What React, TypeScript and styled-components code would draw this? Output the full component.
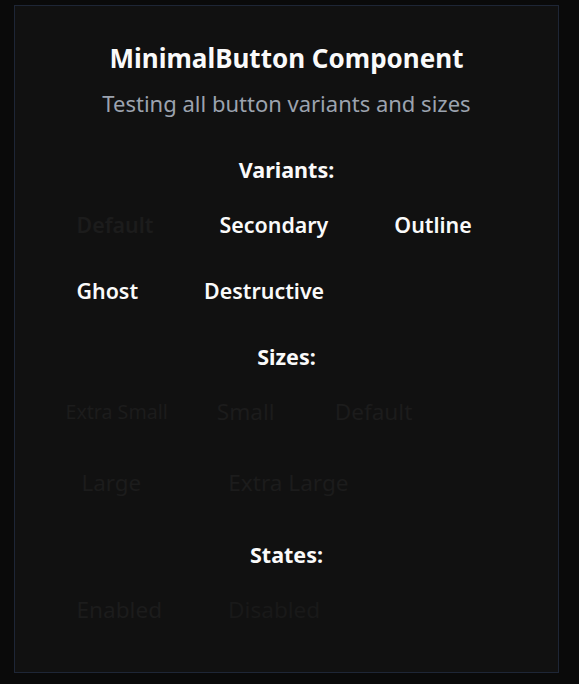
import React from "react";
import styled, { createGlobalStyle } from "styled-components";

const Global = createGlobalStyle`
  html, body { margin: 0; padding: 0; background: #0a0a0a; }
  body { font-family: "Noto Sans", "DejaVu Sans", sans-serif; }
  * { box-sizing: border-box; }
`;

const Page = styled.div`
  padding: 5px 20px 12px 14px;
`;

const Card = styled.section`
  width: 545px;
  height: 668px;
  background: #111111;
  border: 1px solid #1e2636;
  padding: 34px 0 0;
  display: flex;
  flex-direction: column;
  align-items: center;
`;

const Title = styled.h1`
  margin: 0;
  font-size: 26px;
  line-height: 36px;
  font-weight: 700;
  color: #fafafa;
`;

const Subtitle = styled.p`
  margin: 13px 0 0;
  font-size: 22px;
  line-height: 28px;
  color: #9ca3af;
`;

const Section = styled.div<{ $top: number }>`
  margin-top: ${(p) => p.$top}px;
  display: flex;
  flex-direction: column;
  align-items: center;
  gap: 15px;
`;

const Heading = styled.h2`
  margin: 0;
  font-size: 21.5px;
  line-height: 28px;
  font-weight: 700;
  color: #fafafa;
`;

const Row = styled.div`
  width: 454px;
  display: flex;
  flex-wrap: wrap;
  align-items: center;
  column-gap: 32px;
  row-gap: 16px;
`;

type Variant = "default" | "secondary" | "outline" | "ghost" | "destructive";
type Size = "xs" | "sm" | "md" | "lg" | "xl";

const sizes: Record<Size, { h: number; px: number; fs: number }> = {
  xs: { h: 40, px: 6, fs: 19.6 },
  sm: { h: 44, px: 11, fs: 22.6 },
  md: { h: 50, px: 17, fs: 22.6 },
  lg: { h: 60, px: 22, fs: 22.4 },
  xl: { h: 60, px: 33, fs: 22.6 },
};

const variantColor: Record<Variant, string> = {
  default: "#1c1c1c",
  secondary: "#fafafa",
  outline: "#fafafa",
  ghost: "#fafafa",
  destructive: "#fafafa",
};

const MinimalButton = styled.button<{ $variant: Variant; $size: Size; $strong?: boolean }>`
  height: ${(p) => sizes[p.$size].h}px;
  padding: 0 ${(p) => sizes[p.$size].px}px;
  font-family: inherit;
  font-size: ${(p) => (p.$strong ? 21.4 : sizes[p.$size].fs)}px;
  font-weight: ${(p) => (p.$strong ? 600 : 400)};
  color: ${(p) => variantColor[p.$variant]};
  background: transparent;
  border: none;
  white-space: nowrap;
  cursor: pointer;
  &:disabled {
    color: #191919;
    cursor: default;
  }
`;

export default function App() {
  return (
    <>
      <Global />
      <Page>
        <Card>
          <Title>MinimalButton Component</Title>
          <Subtitle>Testing all button variants and sizes</Subtitle>

          <Section $top={39}>
            <Heading>Variants:</Heading>
            <Row>
              <MinimalButton $variant="default" $size="md" $strong>Default</MinimalButton>
              <MinimalButton $variant="secondary" $size="md" $strong>Secondary</MinimalButton>
              <MinimalButton $variant="outline" $size="md" $strong>Outline</MinimalButton>
              <MinimalButton $variant="ghost" $size="md" $strong>Ghost</MinimalButton>
              <MinimalButton $variant="destructive" $size="md" $strong>Destructive</MinimalButton>
            </Row>
          </Section>

          <Section $top={28}>
            <Heading>Sizes:</Heading>
            <Row>
              <MinimalButton $variant="default" $size="xs">Extra Small</MinimalButton>
              <MinimalButton $variant="default" $size="sm">Small</MinimalButton>
              <MinimalButton $variant="default" $size="md">Default</MinimalButton>
              <MinimalButton $variant="default" $size="lg">Large</MinimalButton>
              <MinimalButton $variant="default" $size="xl">Extra Large</MinimalButton>
            </Row>
          </Section>

          <Section $top={29}>
            <Heading>States:</Heading>
            <Row>
              <MinimalButton $variant="default" $size="md">Enabled</MinimalButton>
              <MinimalButton $variant="default" $size="md" disabled>Disabled</MinimalButton>
            </Row>
          </Section>
        </Card>
      </Page>
    </>
  );
}
